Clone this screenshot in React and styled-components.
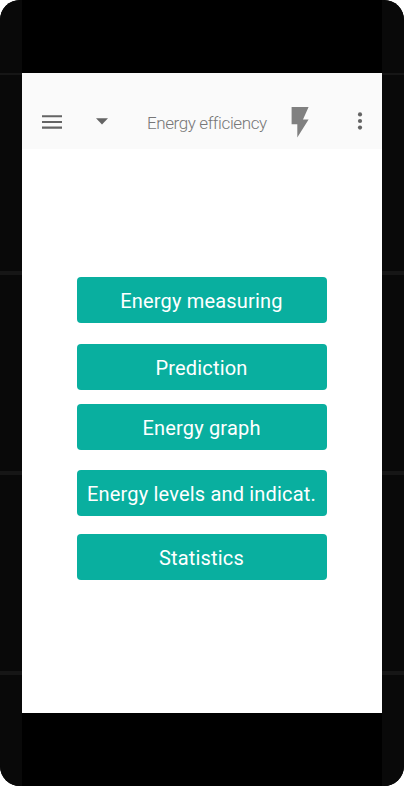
import React from "react";
import styled, { createGlobalStyle } from "styled-components";

const GlobalStyle = createGlobalStyle`
  * { box-sizing: border-box; }
  body { margin: 0; background: #fff; font-family: Roboto, sans-serif; }
`;

const Phone = styled.div`
  width: 404px;
  height: 786px;
  display: grid;
  grid-template-columns: 22px 360px 22px;
  border-radius: 20px;
  overflow: hidden;
  background: #000;
`;

const Bezel = styled.div`
  height: 100%;
  padding-top: 73px;
  background: #090909;
`;

const Seam = styled.div`
  height: ${({ $size }) => $size}px;
  margin-bottom: ${({ $gap }) => $gap}px;
  background: #161616;
`;

const Screen = styled.main`
  height: 640px;
  margin-top: 73px;
  background: #fff;
`;

const Toolbar = styled.header`
  height: 76px;
  padding: 20px 18px 0 20px;
  display: flex;
  align-items: flex-start;
  background: #fafafa;
`;

const Icon = styled.svg`
  display: block;
  flex: none;
  width: ${({ $w }) => $w}px;
  height: ${({ $h }) => $h}px;
  margin-top: ${({ $top }) => $top}px;
  margin-left: ${({ $left = 0 }) => $left}px;
  fill: ${({ $color = "#646464" }) => $color};
`;

const Title = styled.h1`
  margin: 20px 0 0 39px;
  width: 120px;
  font-size: 17px;
  font-weight: 300;
  line-height: 21px;
  letter-spacing: -0.4px;
  white-space: nowrap;
  color: #777;
`;

const Menu = styled.nav`
  padding-top: 128px;
  display: flex;
  flex-direction: column;
  align-items: center;
`;

const MenuButton = styled.button`
  width: 250px;
  height: 46px;
  margin: 0 0 ${({ $gap }) => $gap}px;
  padding: 2px 1px 0 0;
  border: 0;
  border-radius: 4px;
  background: #09af9f;
  color: #fff;
  font: 400 20px/24px Roboto, sans-serif;
  letter-spacing: 0.18px;
  white-space: nowrap;
`;

const items = [
  { label: "Energy measuring", gap: 21 },
  { label: "Prediction", gap: 14 },
  { label: "Energy graph", gap: 20 },
  { label: "Energy levels and indicat.", gap: 18 },
  { label: "Statistics", gap: 0 },
];

function Side() {
  return (
    <Bezel>
      <Seam $size={2} $gap={196} />
      <Seam $size={4} $gap={196} />
      <Seam $size={4} $gap={196} />
      <Seam $size={4} $gap={0} />
    </Bezel>
  );
}

export default function App() {
  return (
    <>
      <GlobalStyle />
      <Phone>
        <Side />
        <Screen>
          <Toolbar>
            <Icon $w={20} $h={14} $top={22} viewBox="0 0 20 14">
              <path d="M0 0.2h20v2.1H0zM0 5.9h20v2.1H0zM0 11.6h20v2.1H0z" />
            </Icon>
            <Icon $w={12} $h={7} $top={25} $left={34} viewBox="0 0 12 7">
              <path d="M0 0.3h12L6 6.6z" />
            </Icon>
            <Title>Energy efficiency</Title>
            <Icon $w={18} $h={31} $top={14} $left={24} $color="#808080" viewBox="0 0 18 31">
              <path d="M0.6 0H17.6L12 12.5H17.6L6.3 30.5V17.2H0.6z" />
            </Icon>
            <Icon $w={6} $h={20} $top={18} $left={48} viewBox="0 0 6 20">
              <circle cx="3" cy="3.4" r="2.1" />
              <circle cx="3" cy="10" r="2.1" />
              <circle cx="3" cy="16.6" r="2.1" />
            </Icon>
          </Toolbar>
          <Menu>
            {items.map(({ label, gap }) => (
              <MenuButton key={label} type="button" $gap={gap}>
                {label}
              </MenuButton>
            ))}
          </Menu>
        </Screen>
        <Side />
      </Phone>
    </>
  );
}
